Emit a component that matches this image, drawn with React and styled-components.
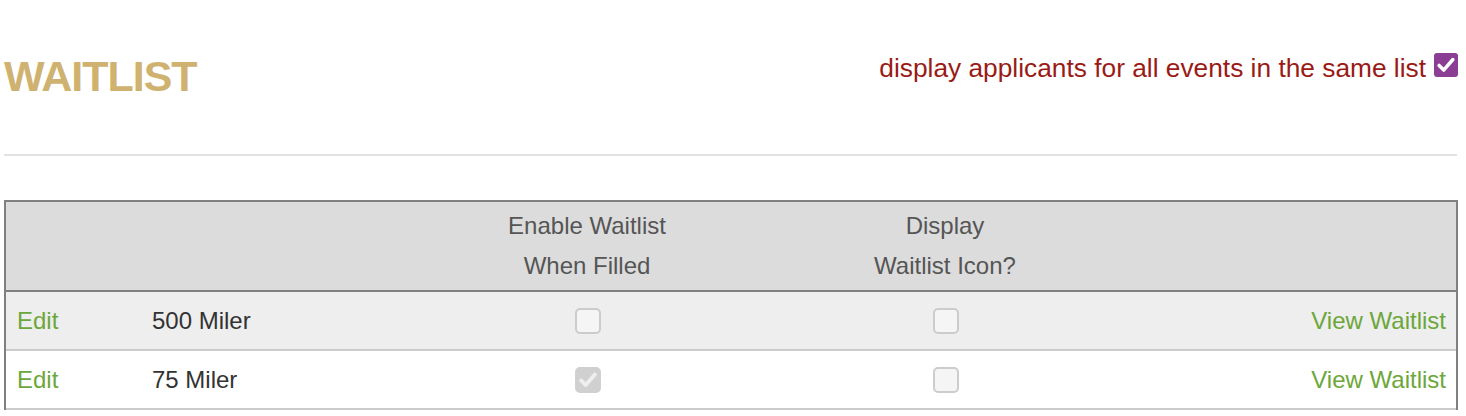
import React from "react"
import styled, { createGlobalStyle } from "styled-components"

const events = [
  { name: "500 Miler", enabled: false, icon: false },
  { name: "75 Miler", enabled: true, icon: false },
]

const Check = ({ color, width }) => (
  <svg viewBox="0 0 24 24" width="100%" height="100%">
    <polyline
      points="4.5,12.5 9.5,17.5 19.5,6"
      fill="none"
      stroke={color}
      strokeWidth={width}
      strokeLinecap="round"
      strokeLinejoin="round"
    />
  </svg>
)

const App = () => {
  return (
    <Page>
      <GlobalStyle />
      <Header>
        <Title>WAITLIST</Title>
        <Option>
          display applicants for all events in the same list
          <PurpleBox>
            <Check color="#ffffff" width={3.8} />
          </PurpleBox>
        </Option>
      </Header>
      <Rule />
      <Table>
        <colgroup>
          <col style={{ width: 136 }} />
          <col style={{ width: 295 }} />
          <col style={{ width: 300 }} />
          <col style={{ width: 416 }} />
          <col style={{ width: 303 }} />
        </colgroup>
        <thead>
          <tr>
            <Th />
            <Th />
            <Th>
              Enable Waitlist
              <br />
              When Filled
            </Th>
            <Th>
              Display
              <br />
              Waitlist Icon?
            </Th>
            <Th />
          </tr>
        </thead>
        <tbody>
          {events.map((ev, i) => (
            <tr key={ev.name}>
              <Td $odd={i % 2 === 0}>
                <Link href="#">Edit</Link>
              </Td>
              <Td $odd={i % 2 === 0}>
                <Name>{ev.name}</Name>
              </Td>
              <Td $odd={i % 2 === 0} $center>
                <Box $checked={ev.enabled}>
                  {ev.enabled && <Check color="#eeeeee" width={4.2} />}
                </Box>
              </Td>
              <Td $odd={i % 2 === 0} $center>
                <Box $checked={ev.icon}>
                  {ev.icon && <Check color="#eeeeee" width={4.2} />}
                </Box>
              </Td>
              <Td $odd={i % 2 === 0} $right>
                <Link href="#">View Waitlist</Link>
              </Td>
            </tr>
          ))}
        </tbody>
      </Table>
    </Page>
  )
}

export default App

const GlobalStyle = createGlobalStyle`
  body {
    margin: 0;
    background: #ffffff;
    font-family: "Liberation Sans", Arial, Helvetica, sans-serif;
  }
`

const Page = styled.div`
  padding: 0 8px 0 4px;
`

const Header = styled.div`
  display: flex;
  justify-content: space-between;
  align-items: flex-start;
  height: 154px;
  padding-top: 55px;
  box-sizing: border-box;
`

const Title = styled.h1`
  margin: 0;
  font-size: 43px;
  line-height: 1;
  font-weight: bold;
  letter-spacing: -1px;
  color: #cfb26f;
`

const Option = styled.label`
  display: flex;
  align-items: flex-start;
  font-size: 26.3px;
  line-height: 1;
  color: #9a1b16;
`

const PurpleBox = styled.span`
  display: block;
  width: 24px;
  height: 24px;
  margin: -2px 0 0 8px;
  padding: 1px;
  box-sizing: border-box;
  border-radius: 3px;
  background: #8a3f94;
`

const Rule = styled.div`
  height: 2px;
  margin-right: 1px;
  background: #e2e2e2;
`

const Table = styled.table`
  width: 100%;
  margin-top: 44px;
  table-layout: fixed;
  border-collapse: separate;
  border-spacing: 0;
  border: 2px solid #808080;
  border-bottom: none;
  font-size: 24px;
`

const Th = styled.th`
  padding: 4px 6px;
  background: #dcdcdc;
  border-bottom: 2px solid #808080;
  font-weight: normal;
  line-height: 40px;
  color: #555555;
  text-align: center;
  vertical-align: middle;
`

const Td = styled.td`
  height: 59px;
  padding: 0 10px 0 ${(p) => (p.$right ? "10px" : "11px")};
  box-sizing: border-box;
  background: ${(p) => (p.$odd ? "#eeeeee" : "#ffffff")};
  border-bottom: 2px solid #cccccc;
  text-align: ${(p) => (p.$center ? "center" : p.$right ? "right" : "left")};
  vertical-align: middle;
  &:nth-child(2) {
    padding-left: 10px;
  }
`

const Link = styled.a`
  color: #6ca73a;
  text-decoration: none;
`

const Name = styled.span`
  color: #333333;
`

const Box = styled.span`
  display: inline-block;
  vertical-align: middle;
  width: 26px;
  height: 26px;
  box-sizing: border-box;
  border-radius: 5px;
  border: 2px solid ${(p) => (p.$checked ? "#d0d0d0" : "#cccccc")};
  background: ${(p) => (p.$checked ? "#d0d0d0" : "#f5f5f5")};
  padding: 0;
  margin-top: -2px;
`
